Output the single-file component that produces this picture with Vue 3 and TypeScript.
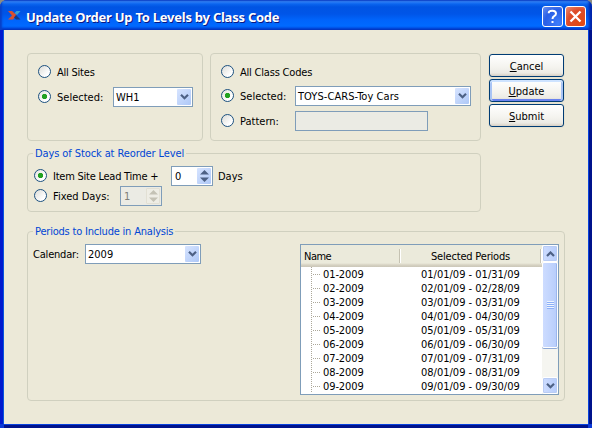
<script setup lang="ts">
import { ref } from 'vue'

interface Period { name: string; range: string }

const site = ref<'all' | 'selected'>('selected')
const classCode = ref<'all' | 'selected' | 'pattern'>('selected')
const stock = ref<'lead' | 'fixed'>('lead')

const days = [31, 28, 31, 30, 31, 30, 31, 31, 30]
const periods: Period[] = days.map((d, i) => {
  const m = String(i + 1).padStart(2, '0')
  return { name: `${m}-2009`, range: `${m}/01/09 - ${m}/${d}/09` }
})
</script>

<template>
  <div class="window">
    <header class="titlebar">
      <svg class="logo" width="13" height="11" viewBox="0 0 13 11">
        <path d="M0 1H4L8.5 5L5 9.5H0L4 5.5Z" fill="#d9502e" />
        <path d="M6.5 3L8.5 1H12.5L9 5Z" fill="#3aa0d0" />
        <path d="M8 5L12.5 9.5H8L6 7.5Z" fill="#143a86" />
      </svg>
      <h1>Update Order Up To Levels by Class Code</h1>
      <button class="cap help" aria-label="Help">
        <svg width="21" height="21" viewBox="0 0 21 21"><path d="M6.8 7.2V6.5Q7 4.8 10.3 4.8Q14 4.8 14 7.6Q14 9.2 12.2 10.2Q10.5 11.2 10.5 13M10.5 15V17" fill="none" stroke="#fff" stroke-width="2" /></svg>
      </button>
      <button class="cap close" aria-label="Close">
        <svg width="21" height="21" viewBox="0 0 21 21"><path d="M5.5 5.5L15.5 15.5M15.5 5.5L5.5 15.5" stroke="#fff" stroke-width="2.3" /></svg>
      </button>
    </header>

    <main class="client">
      <section class="top">
        <div class="group sites">
          <label class="radio r1" @click="site = 'all'"><i :class="{ on: site === 'all' }" /><span class="t-sites">All Sites</span></label>
          <div class="line l-site">
            <label class="radio" @click="site = 'selected'"><i :class="{ on: site === 'selected' }" /><span class="t-sel">Selected:</span></label>
            <div class="combo"><span class="t-wh">WH1</span><b class="drop"><svg width="9" height="6" viewBox="0 0 9 6"><path d="M1 .8L4.5 4.3L8 .8" /></svg></b></div>
          </div>
        </div>

        <div class="group codes">
          <label class="radio r1" @click="classCode = 'all'"><i :class="{ on: classCode === 'all' }" /><span class="t-codes">All Class Codes</span></label>
          <div class="line l-code">
            <label class="radio" @click="classCode = 'selected'"><i :class="{ on: classCode === 'selected' }" /><span class="t-sel">Selected:</span></label>
            <div class="combo"><span class="t-toys">TOYS-CARS-Toy Cars</span><b class="drop"><svg width="9" height="6" viewBox="0 0 9 6"><path d="M1 .8L4.5 4.3L8 .8" /></svg></b></div>
          </div>
          <div class="line l-pattern">
            <label class="radio" @click="classCode = 'pattern'"><i :class="{ on: classCode === 'pattern' }" /><span class="t-pat">Pattern:</span></label>
            <div class="field" />
          </div>
        </div>

        <nav class="actions">
          <button class="push"><span><u>C</u>ancel</span></button>
          <button class="push default"><span><u>U</u>pdate</span></button>
          <button class="push"><span><u>S</u>ubmit</span></button>
        </nav>
      </section>

      <fieldset class="group stock">
        <legend class="t-stock">Days of Stock at Reorder Level</legend>
        <div class="line l-lead">
          <label class="radio" @click="stock = 'lead'"><i :class="{ on: stock === 'lead' }" /><span class="t-lead">Item Site Lead Time +</span></label>
          <div class="spin"><span>0</span><b class="drop"><svg width="9" height="12" viewBox="0 0 9 12"><path d="M0 4.5L4.5 0L9 4.5ZM0 7.5L4.5 12L9 7.5Z" /></svg></b></div>
          <span class="t-days">Days</span>
        </div>
        <div class="line l-fixed">
          <label class="radio" @click="stock = 'fixed'"><i :class="{ on: stock === 'fixed' }" /><span class="t-fixed">Fixed Days:</span></label>
          <div class="spin off"><span>1</span><b class="drop"><svg width="9" height="12" viewBox="0 0 9 12"><path d="M0 4.5L4.5 0L9 4.5ZM0 7.5L4.5 12L9 7.5Z" /></svg></b></div>
        </div>
      </fieldset>

      <fieldset class="group periods">
        <legend class="t-periods">Periods to Include in Analysis</legend>
        <div class="calendar">
          <span class="t-cal">Calendar:</span>
          <div class="combo"><span class="t-year">2009</span><b class="drop"><svg width="9" height="6" viewBox="0 0 9 6"><path d="M1 .8L4.5 4.3L8 .8" /></svg></b></div>
        </div>
        <div class="tree">
          <div class="list">
            <div class="head"><div class="h-name"><span>Name</span></div><div class="h-range"><span>Selected Periods</span></div></div>
            <div v-for="p in periods" :key="p.name" class="row">
              <i class="branch" /><span class="name">{{ p.name }}</span><span class="range">{{ p.range }}</span>
            </div>
          </div>
          <div class="scroll">
            <b class="sbtn"><svg width="9" height="6" viewBox="0 0 9 6"><path d="M1 5L4.5 1.5L8 5" /></svg></b>
            <b class="thumb"><i /></b>
            <b class="sbtn end"><svg width="9" height="6" viewBox="0 0 9 6"><path d="M1 .8L4.5 4.3L8 .8" /></svg></b>
          </div>
        </div>
      </fieldset>
    </main>
  </div>
</template>

<style>
body { margin: 0; background: #8c8c83; overflow: hidden; }
</style>

<style scoped>
* { box-sizing: border-box; }
.window { width: 592px; height: 428px; display: flex; flex-direction: column; overflow: hidden; border-radius: 7px 7px 0 0; background: #0a39d8; font: 11px/14px "DejaVu Sans Condensed", "DejaVu Sans", sans-serif; font-stretch: condensed; color: #000; white-space: nowrap; }
.titlebar { height: 30px; flex: none; display: flex; align-items: flex-start; padding: 6px 6px 0 8px; background: linear-gradient(#0b3fcf 0, #3b8efb 1px, #2c80f8 2px, #0a64ee 4px, #0054e3 7px, #0055e8 14px, #0064fb 20px, #006aff 26px, #0054e8 28px, #0038c8 30px); box-shadow: inset 2px 0 2px #0840c8, inset -3px 0 3px #0023a8; }
.logo { margin: 4px 5px 0 0; flex: none; }
h1 { flex: 1; margin: 1px 0 0; font: bold 13px/20px "Noto Sans", sans-serif; color: #fff; text-shadow: 1px 1px 0 #0a1883; letter-spacing: -.24px; }
.cap { width: 21px; height: 21px; padding: 0; border: 1px solid #fff; border-radius: 3px; margin-left: 2px; }
.cap svg { display: block; margin: -1px; }
.help { background: radial-gradient(circle at 80% 85%, #3e7dfb, #2a5fe6 60%, #6d92f0); }
.close { background: radial-gradient(circle at 80% 85%, #e04a12, #dd4c2a 60%, #ec8d76); }
.client { flex: 1; margin: 0 4px 4px; padding: 23px 23px 0; background: #ece9d8; box-shadow: -1px 0 #0855dd, 1px 0 #0842dd, 0 1px #0842dd, -4px 0 #0019cf, 4px 0 #00138c, 0 4px #00138c; }
.group { margin: 0; padding: 0; border: 1px solid #d0d0bf; border-radius: 4px; min-width: 0; }
.top { display: flex; height: 88px; }
.sites { width: 176px; padding: 11px 0 0 10px; }
.codes { width: 271px; margin-left: 7px; padding: 11px 0 0 10px; }
.actions { margin: 1px 0 0 8px; display: flex; flex-direction: column; gap: 2px; }
.push { width: 75px; height: 23px; border: 1px solid #003c74; border-radius: 3px; padding: 2px 0 0; font: inherit; color: #000; background: linear-gradient(#fff, #f4f3ee 60%, #ecebe5 85%, #d8d0c4); box-shadow: 0 0 0 1px #e5e2d1; }
.push.default { box-shadow: 0 0 0 1px #e5e2d1, inset 0 2px #cee3ff, inset 2px 0 #a9c4f5, inset -2px 0 #a9c4f5, inset 0 -2px #6982ee; }
.push u { text-decoration: underline; text-underline-offset: 1px; text-decoration-thickness: 1px; }
.radio { display: flex; align-items: center; }
.radio i { flex: none; width: 13px; height: 13px; margin-right: 6px; border: 1px solid #1c5180; border-radius: 50%; background: linear-gradient(135deg, #dcdcd7, #fff 75%); }
.radio i.on { background: radial-gradient(circle at 50% 50%, #21a121 0 2.3px, #21a12100 3px), linear-gradient(135deg, #e4e4df, #fff 75%); }
.radio span { line-height: 13px; height: 13px; padding-top: 1px; }
.line { display: flex; align-items: center; height: 20px; }
.r1 { height: 13px; }
.l-site { margin-top: 9px; }
.l-code { margin-top: 8px; }
.l-pattern { margin-top: 5px; }
.l-site .radio { width: 75px; padding-bottom: 1px; }
.l-code .radio, .l-pattern .radio { width: 74px; padding-bottom: 1px; }
.combo, .spin { display: flex; align-items: center; justify-content: space-between; width: 80px; height: 20px; border: 1px solid #7f9db9; background: #fff; padding: 0 1px 0 2px; }
.combo span, .spin span, .t-days, .t-cal { padding-top: 2px; }
.l-code .combo { width: 176px; }
.field { width: 133px; height: 20px; border: 1px solid #7f9db9; background: #ebebe4; }
.drop { width: 14px; height: 16px; border-radius: 1px; display: flex; align-items: center; justify-content: center; background: linear-gradient(135deg, #d7e4ff, #aec8f7); }
.drop path, .sbtn path { fill: none; stroke: #4d6185; stroke-width: 2.2; }
.stock { width: 454px; height: 66px; margin-top: 5px; padding: 0 0 0 6px; }
legend { height: 14px; line-height: 16px; padding: 0 2px; color: #0046d5; }
.stock legend { margin-left: -1px; }
.l-lead { margin-top: 6px; }
.l-lead .radio { width: 137px; padding-bottom: 1px; }
.l-fixed .radio { width: 86px; padding-bottom: 1px; }
.spin { width: 42px; padding-left: 3px; }
.spin .drop path { fill: #4d6185; stroke: none; }
.spin.off { background: #ebebe4; color: #7f7e78; }
.off .drop { background: #eeede5; border: 1px solid #e2e0d4; }
.spin.off .drop path { fill: #c4c2b5; }
.t-days { margin-left: 5px; }
.periods { width: 538px; height: 177px; margin-top: 12px; padding: 0 5px 0 5px; display: grid; grid-template-columns: auto auto; justify-content: space-between; align-items: start; }
.calendar { display: flex; align-items: center; margin-top: 6px; }
.t-cal { width: 52px; letter-spacing: -.2px; }
.t-sites { letter-spacing: -.22px; }
.t-codes { letter-spacing: -.2px; }
.t-toys { letter-spacing: .06px; }
.t-lead { letter-spacing: -.24px; }
.t-stock { letter-spacing: -.1px; }
.t-periods { letter-spacing: -.2px; }
.calendar .combo { width: 116px; }
.tree { width: 259px; height: 151px; margin-top: 6px; border: 1px solid #7f9db9; display: flex; background: #fff; }
.list { width: 241px; }
.head { height: 22px; display: flex; align-items: center; background: linear-gradient(#ebeadb 18px, #d6d2c2 20px, #cbc7b8 22px); }
.h-name, .h-range { height: 14px; line-height: 16px; border-right: 1px solid #c5c2b2; box-shadow: 1px 0 #fff; }
.h-name { width: 99px; padding-left: 3px; letter-spacing: -.5px; }
.h-range { width: 140px; text-align: center; margin-left: 1px; letter-spacing: -.18px; }
.row { height: 14px; line-height: 16px; display: flex; }
.branch { width: 10px; height: 14px; margin: 0 2px 0 10px; background: repeating-linear-gradient(#aca899 0 1px, #fff 1px 2px) 0 0 / 1px 14px no-repeat, repeating-linear-gradient(90deg, #aca899 0 1px, #fff 1px 2px) 0 7px / 10px 1px no-repeat; }
.name { width: 98px; letter-spacing: -.1px; }
.scroll { width: 16px; display: flex; flex-direction: column; background: #f5f5f0; }
.sbtn, .thumb { width: 16px; border: 1px solid #fff; border-radius: 2px; background: linear-gradient(90deg, #cddcff, #b7cdfb); box-shadow: inset 0 0 0 1px #b9ccf4; display: flex; align-items: center; justify-content: center; }
.sbtn { height: 17px; }
.thumb { height: 86px; box-shadow: inset -1px 0 #9bb6ec, 0 1px #8ea9d6; }
.thumb i { width: 7px; height: 8px; background: repeating-linear-gradient(#eef4fe 0 1px, #8cb0f8 1px 2px); }
.end { margin-top: auto; }
</style>
